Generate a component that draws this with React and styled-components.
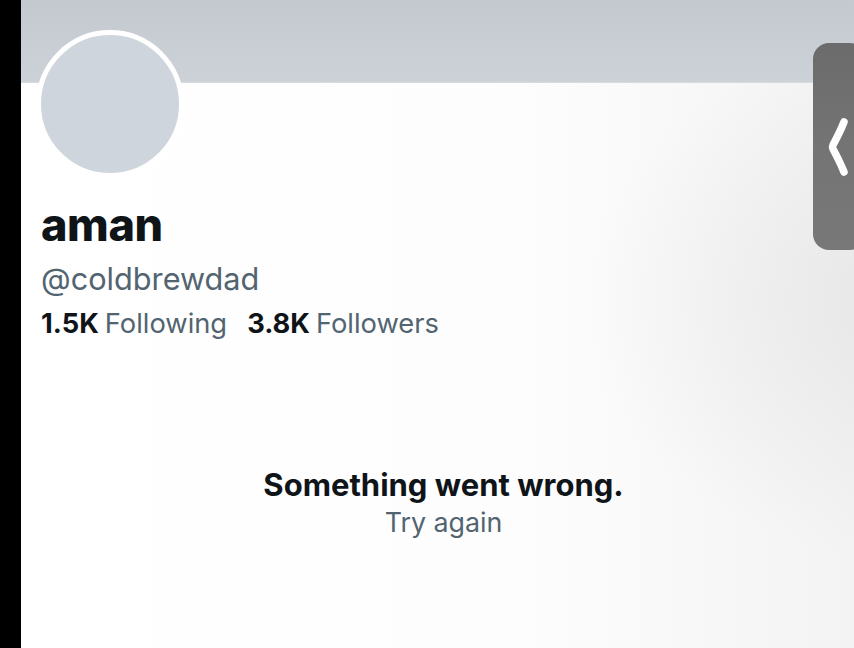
import React from "react";
import styled, { createGlobalStyle } from "styled-components";

const Global = createGlobalStyle`
  html, body { margin: 0; padding: 0; background: #000; }
  body { font-family: Inter, "Liberation Sans", Arial, sans-serif; }
  #root { width: 854px; height: 648px; overflow: hidden; }
`;

const Page = styled.div`
  display: flex;
  width: 854px;
  height: 648px;
  background: #000;
`;

const LeftEdge = styled.div`
  width: 21px;
  flex: none;
  background: #000;
`;

const Main = styled.main`
  position: relative;
  flex: 1;
  display: flex;
  flex-direction: column;
  background:
    radial-gradient(ellipse 420px 360px at 860px 300px, rgba(220,220,220,0.5), rgba(255,255,255,0) 70%),
    linear-gradient(90deg, #ffffff 0%, #fdfdfd 60%, #f3f3f3 100%);
  overflow: hidden;
`;

const Banner = styled.div`
  height: 82px;
  flex: none;
  background: linear-gradient(180deg, #c3c9cf 0%, #cdd2d8 100%);
  border-bottom: 1px solid #d7dbe0;
`;

const Profile = styled.section`
  display: flex;
  flex-direction: column;
  align-items: flex-start;
  padding-left: 20px;
`;

const Avatar = styled.div`
  width: 138px;
  height: 138px;
  margin-top: -53px;
  margin-left: -5px;
  border-radius: 50%;
  background: #cfd5dc;
  border: 5px solid #ffffff;
`;

const Name = styled.h1`
  margin: 20px 0 0 0;
  font-size: 45px;
  line-height: 54px;
  font-weight: 800;
  letter-spacing: -0.4px;
  color: #0f1419;
`;

const Handle = styled.div`
  margin-top: 9px;
  font-size: 30.7px;
  line-height: 36px;
  color: #536471;
`;

const Stats = styled.div`
  display: flex;
  gap: 20px;
  margin-top: 10px;
  font-size: 27.3px;
  line-height: 34px;
`;

const Stat = styled.span`
  color: #536471;
  b {
    color: #0f1419;
    font-weight: 700;
    margin-right: 6px;
  }
`;

const ErrorBox = styled.div`
  display: flex;
  flex-direction: column;
  align-items: center;
  margin-top: 125px;
  margin-left: 12px;
`;

const ErrorTitle = styled.div`
  font-size: 31px;
  line-height: 38px;
  font-weight: 700;
  color: #0f1419;
`;

const Retry = styled.div`
  margin-top: 1px;
  font-size: 26.8px;
  line-height: 34px;
  color: #536471;
`;

const SideTab = styled.div`
  position: absolute;
  right: -12px;
  top: 43px;
  width: 53px;
  height: 207px;
  border-radius: 16px;
  background: linear-gradient(180deg, #6b6b6b 0%, #747474 50%, #787878 100%);
  display: flex;
  align-items: center;
  padding-left: 13px;
  box-sizing: border-box;
`;

export default function App() {
  return (
    <>
      <Global />
      <Page>
        <LeftEdge />
        <Main>
          <Banner />
          <Profile>
            <Avatar />
            <Name>aman</Name>
            <Handle>@coldbrewdad</Handle>
            <Stats>
              <Stat><b>1.5K</b>Following</Stat>
              <Stat><b>3.8K</b>Followers</Stat>
            </Stats>
          </Profile>
          <ErrorBox>
            <ErrorTitle>Something went wrong.</ErrorTitle>
            <Retry>Try again</Retry>
          </ErrorBox>
          <SideTab>
            <svg width="24" height="62" viewBox="0 0 24 62">
              <path d="M18 6 Q14 16 7 29 Q6 31 7 33 Q14 46 18 56" fill="none" stroke="#fff" strokeWidth="7.5" strokeLinecap="round" strokeLinejoin="round" />
            </svg>
          </SideTab>
        </Main>
      </Page>
    </>
  );
}
